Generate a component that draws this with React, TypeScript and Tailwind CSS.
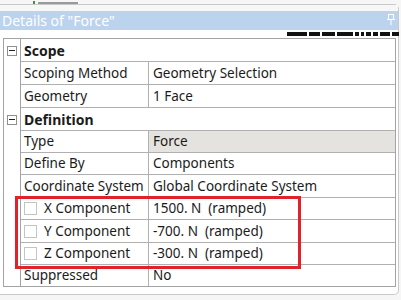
import { Fragment } from "react";

type Row =
  | { kind: "group"; label: string; h: string }
  | { kind: "prop"; label: string; value: string; h: string; check?: boolean; shaded?: boolean };

const rows: Row[] = [
  { kind: "group", label: "Scope", h: "h-[23px]" },
  { kind: "prop", label: "Scoping Method", value: "Geometry Selection", h: "h-[23px]" },
  { kind: "prop", label: "Geometry", value: "1 Face", h: "h-[23px]" },
  { kind: "group", label: "Definition", h: "h-[23px]" },
  { kind: "prop", label: "Type", value: "Force", h: "h-[22px]", shaded: true },
  { kind: "prop", label: "Define By", value: "Components", h: "h-[22px]" },
  { kind: "prop", label: "Coordinate System", value: "Global Coordinate System", h: "h-[23px]" },
  { kind: "prop", label: "X Component", value: "1500. N\u00a0\u00a0(ramped)", h: "h-[22px]", check: true },
  { kind: "prop", label: "Y Component", value: "-700. N\u00a0\u00a0(ramped)", h: "h-[23px]", check: true },
  { kind: "prop", label: "Z Component", value: "-300. N\u00a0\u00a0(ramped)", h: "h-[22px]", check: true },
  { kind: "prop", label: "Suppressed", value: "No", h: "h-[21px]" },
];

// black dashes to the right of the title strip
const dashes = [20, 11, 13, 16, 4, 3, 5, 5, 10, 7];

function MinusBox() {
  return (
    <div className="flex h-[10px] w-[10px] items-center justify-center border border-[#8f8f8f] bg-white">
      <div className="h-px w-[6px] bg-[#222]" />
    </div>
  );
}

function PinIcon() {
  return (
    <svg width="8" height="11" viewBox="0 0 8 11" className="mb-[3px]">
      <rect x="1.5" y="0.5" width="5" height="5" fill="none" stroke="#ffffff" />
      <rect x="0" y="5" width="8" height="1" fill="#ffffff" />
      <rect x="3.5" y="6" width="1" height="5" fill="#ffffff" />
    </svg>
  );
}

export default function App() {
  return (
    <div className="relative h-[300px] w-[401px] overflow-hidden bg-[#f6f6f6] font-['Noto_Sans',sans-serif] text-[13.5px] text-[#1b1b1b]">
      {/* Tree item cut off above the panel */}
      <div className="flex h-[4px] items-end gap-[3px] pl-[33px]">
        <div className="h-[3px] w-[2px] bg-[#3a9a3a]" />
        <div className="h-[2px] w-[40px] bg-[#9a9a9a]" />
      </div>

      {/* Details panel */}
      <div className="flex h-[291px] w-[399px] flex-col rounded-r-[5px] border-t border-r border-b border-[#c9c9c9] bg-white">
        <div className="h-[6px] bg-[#f7f7f7]" />

        {/* Title bar */}
        <div className="flex h-[19px] items-center justify-between bg-[#bcd3ee] pr-[3px] pl-[2px] text-[14px] leading-none text-white">
          <span>Details of "Force"</span>
          <PinIcon />
        </div>

        {/* Strip under the title */}
        <div className="flex h-[8px] items-start pt-[2px]">
          <div className="ml-[282px] h-[4px] w-[3px] bg-[#b8b8b8]" />
          <div className="ml-[5px] flex gap-[2px]">
            {dashes.map((w, i) => (
              <div key={i} className="h-[4px] bg-[#111]" style={{ width: w }} />
            ))}
          </div>
        </div>

        {/* Property grid */}
        <div className="ml-[3px] w-[393px] border border-[#a3a3a3]">
          {rows.map((row, i) => {
            const last = i === rows.length - 1;
            return (
              <div key={i} className={`flex ${row.h}`}>
                <div className="flex w-[17px] shrink-0 items-center justify-center border-r border-[#a3a3a3]">
                  {row.kind === "group" && <MinusBox />}
                </div>
                {row.kind === "group" ? (
                  <div
                    className={`flex flex-1 items-center pl-[3px] text-[14px] font-bold ${last ? "" : "border-b border-[#b0b0b0]"}`}
                  >
                    {row.label}
                  </div>
                ) : (
                  <Fragment>
                    <div
                      className={`flex w-[128px] shrink-0 items-center border-r border-[#b0b0b0] pl-[3px] whitespace-nowrap ${last ? "" : "border-b"}`}
                    >
                      {row.check && (
                        <div className="mr-[7px] h-[13px] w-[13px] shrink-0 border border-[#c4c4c4] bg-white" />
                      )}
                      {row.label}
                    </div>
                    <div
                      className={`flex flex-1 items-center pl-[4px] ${row.shaded ? "bg-[#e5e3df]" : ""} ${last ? "" : "border-b border-[#b0b0b0]"}`}
                    >
                      {row.value}
                    </div>
                  </Fragment>
                )}
              </div>
            );
          })}
        </div>
      </div>

      {/* Red highlight drawn over the component rows */}
      <div className="absolute top-[196px] left-[15px] h-[73px] w-[286px] border-[3px] border-[#e1222b]" />
    </div>
  );
}
